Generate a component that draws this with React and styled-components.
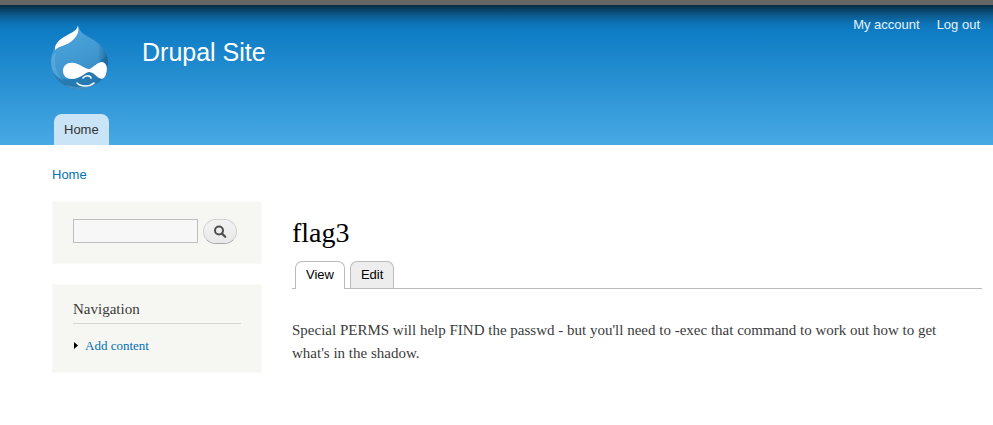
import React from "react";
import styled, { createGlobalStyle, css } from "styled-components";

const sans = '"Liberation Sans", Arial, sans-serif';
const serif = '"Liberation Serif", Georgia, serif';

const GlobalStyle = createGlobalStyle`
  *, *::before, *::after { box-sizing: border-box; }
  body {
    margin: 0;
    background: #fff;
    color: #3b3b3b;
    font: 15px/23px ${serif};
  }
  a { color: #0071b3; text-decoration: none; }
  h1, h2, p, ul { margin: 0; padding: 0; font-weight: normal; }
  ul { list-style: none; }
`;

const Header = styled.header`
  display: flex;
  flex-direction: column;
  justify-content: space-between;
  min-height: 145px;
  padding: 0 13px 0 51px;
  border-top: 5px solid #666;
  background: linear-gradient(#06293f 0, #0a4468 5px, #0c5c91 11px, #0d74b8 19px, #0e7cc4 26px, #1b86cb 50px, #48a9e4 100%);
  font-family: ${sans};
`;

const Masthead = styled.div`
  display: flex;
  align-items: flex-start;
`;

const LogoLink = styled.a`
  display: block;
  margin: 20px 33px 0 0;
  svg { display: block; }
`;

const SiteName = styled.a`
  margin-top: 32px;
  color: #fffeff;
  font-size: 25px;
  line-height: 30px;
`;

const AccountMenu = styled.ul`
  display: flex;
  gap: 17px;
  margin: 10px 0 0 auto;
  font-size: 13px;
  line-height: 20px;
  a { color: #e4f3fc; }
`;

const MainMenu = styled.nav`
  display: flex;
  padding-left: 3px;
`;

const MenuTab = styled.a`
  padding: 0 10px;
  border-radius: 8px 8px 0 0;
  background: #c9e4f6;
  color: #333;
  font-size: 13px;
  line-height: 31px;
`;

const Breadcrumb = styled.nav`
  padding: 20px 52px 0;
  font: 13px/20px ${sans};
`;

const Columns = styled.div`
  display: grid;
  grid-template-columns: 210px minmax(0, 1fr);
  gap: 30px;
  align-items: start;
  padding: 16px 11px 50px 52px;
`;

const Sidebar = styled.aside`
  display: grid;
  gap: 20px;
`;

const Block = styled.section`
  padding: ${(p) => (p.$compact ? "17px 20px 19px" : "13px 20px 16px")};
  border: 1px solid #f9f9f5;
  background: #f6f6f2;
`;

const SearchForm = styled.form`
  display: flex;
  gap: 5px;
`;

const SearchInput = styled.input`
  width: 125px;
  height: 24px;
  padding: 2px 4px;
  border: 1px solid #bebebe;
  border-radius: 0;
  background: #f7f7f7;
  color: #3b3b3b;
  font: 13px ${sans};
`;

const SearchButton = styled.button`
  display: flex;
  align-items: center;
  justify-content: center;
  width: 34px;
  height: 25px;
  padding: 0;
  border: 1px solid #d2d2d2;
  border-bottom-color: #a8a8a8;
  border-radius: 13px;
  background: linear-gradient(#f3f3f3, #e8e8e8);
  cursor: pointer;
`;

const BlockTitle = styled.h2`
  padding-bottom: 2px;
  border-bottom: 1px solid #d3d7d0;
  font-size: 15px;
  line-height: 23px;
`;

const NavItem = styled.li`
  display: flex;
  align-items: center;
  gap: 7px;
  margin-top: 11px;
  font-size: 13px;
  line-height: 21px;
`;

const Content = styled.main`
  padding-top: 15px;
`;

const PageTitle = styled.h1`
  color: #000;
  font-size: 28px;
  line-height: 34px;
`;

const Tabs = styled.nav`
  display: flex;
  gap: 5px;
  margin-top: 11px;
  padding-left: 3px;
  border-bottom: 1px solid #bbb;
`;

const Tab = styled.a`
  padding: 0 10px;
  border: 1px solid #bbb;
  border-bottom: 0;
  border-radius: 7px 7px 0 0;
  background: #ededed;
  color: #000;
  font: 13px/26px ${sans};
  ${(p) =>
    p.$active &&
    css`
      margin-bottom: -1px;
      padding-bottom: 1px;
      background: #fff;
    `}
`;

const Body = styled.p`
  margin-top: 30px;
  padding-right: 20px;
`;

function Logo() {
  return (
    <svg width="58" height="65" viewBox="0 0 58 65" aria-hidden="true">
      <defs>
        <linearGradient id="drop" x1="0.3" y1="0" x2="0.7" y2="1">
          <stop offset="0" stopColor="#4ba5da" />
          <stop offset="0.5" stopColor="#4299d2" />
          <stop offset="1" stopColor="#2f86bf" />
        </linearGradient>
        <linearGradient id="rim" x1="0" y1="0" x2="1" y2="0">
          <stop offset="0.8" stopColor="#165f93" stopOpacity="0" />
          <stop offset="1" stopColor="#165f93" stopOpacity="0.8" />
        </linearGradient>
        <clipPath id="dropClip">
          <path d="M27 0C28 7 34 10 41 14C51 20 57 27 57 37C57 53 44 64 29 64C12 64 0 53 0 37C0 27 5 20 12 14C18 9 25 8 27 0Z" />
        </clipPath>
      </defs>
      <g clipPath="url(#dropClip)">
        <rect width="58" height="65" fill="url(#drop)" />
        <path d="M58 28C52 34 47 38 38 44C31 50 23 56 12 54C7 53 4 50 0 46V65H58Z" fill="#1b6ea4" opacity="0.6" />
        <rect width="58" height="65" fill="url(#rim)" />
        <path d="M5 27C2 41 6 51 14 57C3 51 -2 42 1 31Z" fill="#83c4ea" opacity="0.3" />
        <path d="M14 60C25 63 39 63 46 58C40 66 22 67 14 60Z" fill="#8ac8ea" opacity="0.3" />
      </g>
      <path d="M27 1C29 8 24 14 18 18C13 21 8 21 4 25C3 20 8 15 13 12C19 8 25 7 27 1Z" fill="#fff" />
      <path d="M12 46C12 40 17 37 23 38C29 39 34 44 38 44C42 43 46 37 51 37C56 38 57 43 55 49C54 53 51 55 48 53C45 51 42 47 38 47C33 48 29 54 21 54C16 54 12 51 12 46Z" fill="#fff" />
      <g fill="none" stroke="#fff" strokeLinecap="round" strokeWidth="1.6">
        <path d="M32 53C34 50 39 50 40 53" />
        <path d="M26 58C30 62 38 62 43 58" />
      </g>
    </svg>
  );
}

function SearchIcon() {
  return (
    <svg width="14" height="14" viewBox="0 0 14 14" fill="none" stroke="#4d4d4d" aria-hidden="true">
      <circle cx="6" cy="5.5" r="4" strokeWidth="2" />
      <path d="M9 8.6L12.2 11.8" strokeWidth="2.2" strokeLinecap="round" />
    </svg>
  );
}

function CollapsedMarker() {
  return (
    <svg width="5" height="7" viewBox="0 0 5 7" aria-hidden="true">
      <path d="M1 0L5 3.5L1 7Z" fill="#000" />
    </svg>
  );
}

export default function App() {
  return (
    <>
      <GlobalStyle />
      <Header>
        <Masthead>
          <LogoLink href="#" aria-label="Drupal Site home">
            <Logo />
          </LogoLink>
          <SiteName href="#">Drupal Site</SiteName>
          <AccountMenu>
            <li><a href="#account">My account</a></li>
            <li><a href="#logout">Log out</a></li>
          </AccountMenu>
        </Masthead>
        <MainMenu aria-label="Main menu">
          <MenuTab href="#">Home</MenuTab>
        </MainMenu>
      </Header>
      <Breadcrumb aria-label="Breadcrumb">
        <a href="#">Home</a>
      </Breadcrumb>
      <Columns>
        <Sidebar>
          <Block $compact>
            <SearchForm role="search" onSubmit={(e) => e.preventDefault()}>
              <SearchInput type="text" name="search" aria-label="Search" />
              <SearchButton type="submit" aria-label="Search">
                <SearchIcon />
              </SearchButton>
            </SearchForm>
          </Block>
          <Block>
            <BlockTitle>Navigation</BlockTitle>
            <ul>
              <NavItem>
                <CollapsedMarker />
                <a href="#add">Add content</a>
              </NavItem>
            </ul>
          </Block>
        </Sidebar>
        <Content>
          <PageTitle>flag3</PageTitle>
          <Tabs aria-label="Page tabs">
            <Tab href="#view" $active aria-current="page">View</Tab>
            <Tab href="#edit">Edit</Tab>
          </Tabs>
          <Body>
            Special PERMS will help FIND the passwd - but you'll need to -exec that command to work out how to get
            what's in the shadow.
          </Body>
        </Content>
      </Columns>
    </>
  );
}
